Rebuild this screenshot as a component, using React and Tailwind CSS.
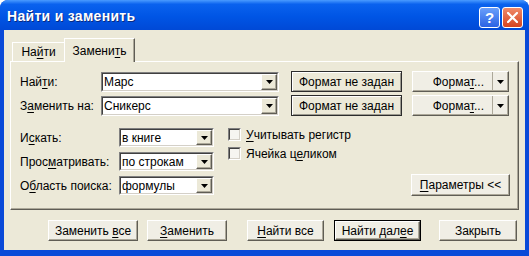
import React from "react";

const font = { fontFamily: '"Liberation Sans", Arial, sans-serif' };

// classic raised button
const Btn = ({ children, className = "", isDefault = false }) => (
  <div
    className={
      "flex items-center justify-center text-[12px] text-black " +
      (isDefault ? "border border-black " : "") +
      className
    }
  >
    <div className="w-full h-full flex items-center justify-center bg-[#F0EEE5] border border-t-white border-l-white border-r-[#5f5d55] border-b-[#5f5d55] shadow-[inset_-1px_-1px_0_#ACA899]">
      <span>{children}</span>
    </div>
  </div>
);

const U = ({ children }) => <span className="underline underline-offset-2">{children}</span>;

const Arrow = () => (
  <svg width="7" height="4" viewBox="0 0 7 4">
    <path d="M0 0h7L3.5 4z" fill="#000" />
  </svg>
);

const ArrowBtn = ({ className = "" }) => (
  <div className={"w-[16px] h-full flex items-center justify-center bg-[#ECE9D8] border border-t-white border-l-white border-r-[#5f5d55] border-b-[#5f5d55] shadow-[inset_-1px_-1px_0_#ACA899] " + className}>
    <Arrow />
  </div>
);

const Combo = ({ value, className = "" }) => (
  <div className={"flex border border-t-[#808080] border-l-[#808080] border-r-white border-b-white " + className}>
    <div className="flex-1 flex border border-t-[#404040] border-l-[#404040] border-r-[#D4D0C8] border-b-[#D4D0C8] bg-white">
      <div className="flex-1 flex items-center pl-[1px] text-[12px] text-black">{value}</div>
      <ArrowBtn />
    </div>
  </div>
);

const Check = ({ children }) => (
  <div className="flex items-center gap-[5px] text-[12px] h-[19px]">
    <div className="w-[13px] h-[13px] border border-t-[#808080] border-l-[#808080] border-r-white border-b-white">
      <div className="w-full h-full bg-[#F6F5F1] border border-t-[#404040] border-l-[#404040] border-r-[#D4D0C8] border-b-[#D4D0C8]" />
    </div>
    <span>{children}</span>
  </div>
);

const FormatNone = () => (
  <div className="w-[111px] h-[21px] border border-[#2c2c2c] bg-[#ECE9D8] flex items-center justify-center text-[12px] shadow-[inset_1px_1px_0_#fff,inset_-1px_-1px_0_#9c9a8f]">
    Формат не задан
  </div>
);

const FormatSplit = () => (
  <div className="w-[97px] h-[21px] flex bg-[#F0EEE5] border border-t-white border-l-white border-r-[#5f5d55] border-b-[#5f5d55] shadow-[inset_-1px_-1px_0_#ACA899]">
    <div className="flex-1 flex items-center justify-end pr-[8px] text-[12px]">
      <span>Форма<U>т</U>...</span>
    </div>
    <div className="w-[16px] flex items-center justify-center border-l border-l-[#ACA899]">
      <Arrow />
    </div>
  </div>
);

export default function App() {
  return (
    <div style={font} className="w-[529px] h-[256px] bg-[#0a4ad8] rounded-t-[8px] flex flex-col overflow-hidden text-black">
      {/* Title bar */}
      <div className="h-[30px] flex items-center pl-[7px] pr-[6px] bg-[linear-gradient(180deg,#4a9bff_0%,#0a62ee_14%,#0055e5_55%,#0049d6_100%)]">
        <span className="text-white font-bold text-[14px] tracking-[0.3px] pt-[2px] [text-shadow:1px_1px_0_#0a2a80]">
          Найти и заменить
        </span>
        <div className="ml-auto flex gap-[2px] pt-[4px]">
          <div className="w-[21px] h-[21px] rounded-[3px] border border-white bg-[linear-gradient(180deg,#6a9ffb,#2a62e4)] flex items-center justify-center text-white font-bold text-[15px] leading-none">
            ?
          </div>
          <div className="w-[21px] h-[21px] rounded-[3px] border border-white bg-[linear-gradient(180deg,#f08a6a,#d6431f)] flex items-center justify-center">
            <svg width="11" height="11" viewBox="0 0 11 11">
              <path d="M1 1L10 10M10 1L1 10" stroke="#fff" strokeWidth="2.2" strokeLinecap="square" />
            </svg>
          </div>
        </div>
      </div>

      {/* Body */}
      <div className="flex-1 mx-[4px] mb-[6px] bg-[#ECE9D8] flex flex-col pt-[8px] px-[6px]">
        {/* Tabs */}
        <div className="h-[23px] flex items-end pl-[2px] relative z-10">
          <div className="h-[19px] w-[53px] flex items-center justify-center text-[12px] border border-b-0 border-t-white border-l-white border-r-[#ACA899]">
            <span>На<U>й</U>ти</span>
          </div>
          <div className="h-[24px] w-[71px] -mb-[1px] -ml-[1px] flex items-center justify-center text-[12px] bg-[#ECE9D8] border border-b-0 border-t-white border-l-white border-r-[#5f5d55] shadow-[inset_-1px_0_0_#ACA899]">
            <span>Замени<U>т</U>ь</span>
          </div>
        </div>

        {/* Panel */}
        <div className="h-[149px] border border-t-white border-l-white border-r-[#5f5d55] border-b-[#5f5d55] shadow-[inset_-1px_-1px_0_#ACA899] pl-[9px] pr-[8px] pt-[9px] flex flex-col">
          <div className="flex items-center h-[21px]">
            <div className="w-[81px] text-[12px]">Най<U>т</U>и:</div>
            <Combo value="Марс" className="w-[178px] h-[20px]" />
            <div className="ml-[12px]"><FormatNone /></div>
            <div className="ml-[10px]"><FormatSplit /></div>
          </div>
          <div className="flex items-center h-[21px] mt-[3px]">
            <div className="w-[81px] text-[12px]">З<U>а</U>менить на:</div>
            <Combo value="Сникерс" className="w-[178px] h-[20px]" />
            <div className="ml-[12px]"><FormatNone /></div>
            <div className="ml-[10px]"><FormatSplit /></div>
          </div>

          <div className="flex mt-[12px]">
            <div className="flex flex-col gap-[5px]">
              <div className="flex items-center h-[19px]">
                <div className="w-[99px] text-[12px]">И<U>с</U>кать:</div>
                <Combo value="в книге" className="w-[95px] h-[19px]" />
              </div>
              <div className="flex items-center h-[19px]">
                <div className="w-[99px] text-[12px]">Прос<U>м</U>атривать:</div>
                <Combo value="по строкам" className="w-[95px] h-[19px]" />
              </div>
              <div className="flex items-center h-[19px]">
                <div className="w-[99px] text-[12px]">О<U>б</U>ласть поиска:</div>
                <Combo value="формулы" className="w-[95px] h-[19px]" />
              </div>
            </div>
            <div className="ml-[14px] -mt-[3px] flex flex-col">
              <Check><U>У</U>читывать регистр</Check>
              <Check>Ячейка ц<U>е</U>ликом</Check>
            </div>
            <div className="ml-auto flex items-end">
              <Btn className="w-[99px] h-[22px] -mb-[1px]"><U>П</U>араметры &lt;&lt;</Btn>
            </div>
          </div>
        </div>

        {/* Bottom buttons */}
        <div className="flex mt-[10px] h-[21px]">
          <Btn className="w-[90px] h-[21px] ml-[38px]">Заменить <U>в</U>се</Btn>
          <Btn className="w-[80px] h-[21px] ml-[9px]"><U>З</U>аменить</Btn>
          <Btn className="w-[77px] h-[21px] ml-[20px]"><U>Н</U>айти все</Btn>
          <Btn isDefault className="w-[87px] h-[21px] ml-[10px]">Найти дал<U>е</U>е</Btn>
          <Btn className="w-[78px] h-[21px] ml-[18px]">Закрыть</Btn>
        </div>
      </div>
    </div>
  );
}
